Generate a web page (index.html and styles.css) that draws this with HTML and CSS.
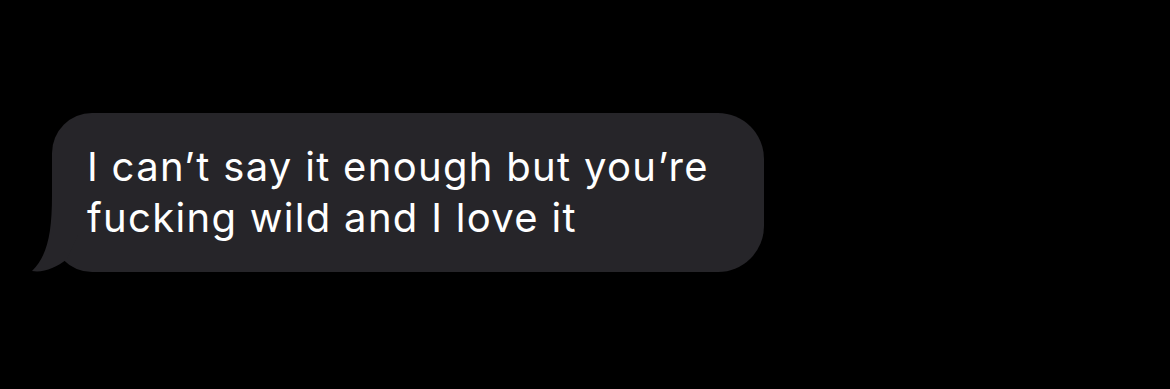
FILE: index.html
```html
<!DOCTYPE html>
<html>
<head>
<meta charset="utf-8">
<link rel="stylesheet" href="styles.css">
</head>
<body>
<div class="thread">
  <div class="bubble">
    <svg class="tail" width="52" height="80" viewBox="0 0 52 80">
      <path d="M24 0 C24 40 19 61 4 76 C15 78 28 73 39 64 L50 40 L50 0 Z" fill="#262529"/>
    </svg>
    <p class="text">I can’t say it enough but you’re<br>fucking wild and I love it</p>
  </div>
</div>
</body>
</html>
```
FILE: styles.css
```css
html, body {
  margin: 0;
  padding: 0;
  background: #000;
  width: 1170px;
  height: 389px;
  overflow: hidden;
}
.thread {
  padding: 113px 0 0 52px;
  display: flex;
}
.bubble {
  position: relative;
  width: 712px;
  height: 159px;
  box-sizing: border-box;
  background: #262529;
  border-radius: 40px 46px 46px 40px;
  padding: 0 0 0 35px;
  display: flex;
  align-items: center;
}
.tail {
  position: absolute;
  left: -24px;
  top: 82px;
}
.text {
  margin: 0;
  position: relative;
  top: -1px;
  color: #fff;
  font-family: Inter, "Noto Sans", sans-serif;
  font-size: 40px;
  line-height: 51px;
  letter-spacing: 1.3px;
}
```
